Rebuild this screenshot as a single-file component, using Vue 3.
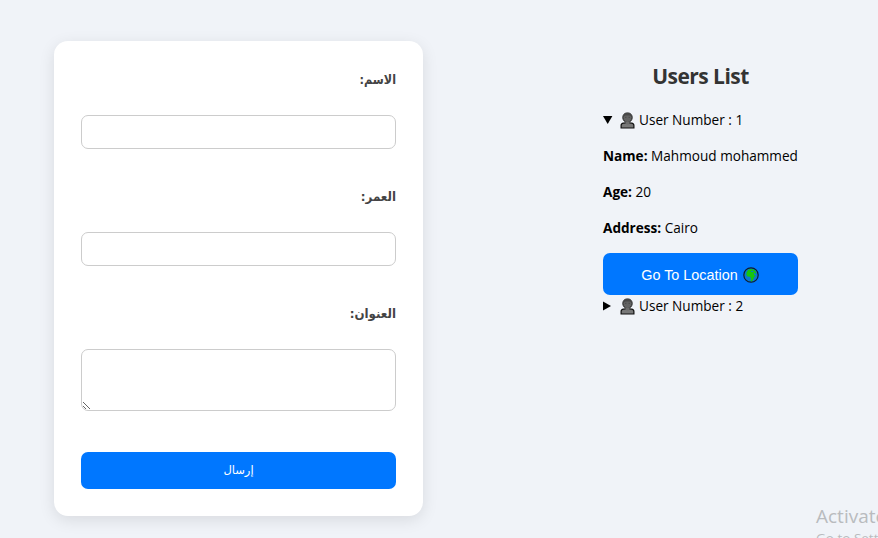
<script setup>
import { ref } from 'vue'

const name = ref('')
const age = ref('')
const address = ref('')
const openUser = ref(1)
const users = [
  { id: 1, name: 'Mahmoud mohammed', age: 20, address: 'Cairo' },
  { id: 2 },
]
</script>

<template>
  <main class="page">
    <form class="card" dir="rtl" @submit.prevent>
      <label for="name" class="short">الاسم:</label>
      <input id="name" v-model="name" type="text" />
      <label for="age">العمر:</label>
      <input id="age" v-model="age" type="text" />
      <label for="address">العنوان:</label>
      <textarea id="address" v-model="address"></textarea>
      <button class="submit" type="submit">إرسال</button>
    </form>

    <section class="users">
      <h2>Users List</h2>
      <div v-for="user in users" :key="user.id" class="user">
        <div class="summary" @click="openUser = user.id">
          <svg class="marker" viewBox="0 0 10 10">
            <path v-if="openUser === user.id" d="M0 1h9.4L4.7 9z" />
            <path v-else d="M0 .5v9L8 5z" />
          </svg>
          <svg class="person" viewBox="0 0 15 17">
            <path d="M1.100 16v-2.600c0-1.300.9-2 2.400-2.200l2-.3h4l2 .3c1.500.2 2.400.9 2.400 2.200V16z" fill="#787878" stroke="#111" stroke-width="1.200" />
            <path d="M7.500.9c3 0 4.700 1.900 4.700 4.600 0 2.600-2 4.900-4.700 4.900S2.800 8.100 2.800 5.500C2.800 2.800 4.500.9 7.500.9z" fill="#626262" stroke="#222" stroke-width="1" />
            <path d="M5.500 9.500h4v2.300c-1 .8-3 .8-4 0z" fill="#6c6c6c" />
            <path d="M3.200 4.800C3.400 2.500 4.900 1.300 7.500 1.300s4.100 1.200 4.300 3.500L9.700 3.500H5.500z" fill="#484848" />
            <path d="M5.300 5.300h1M8.700 5.300h1" stroke="#383838" stroke-width=".8" />
          </svg>
          <span class="text">User Number : {{ user.id }}</span>
        </div>
        <div v-if="openUser === user.id" class="details">
          <p><b>Name:</b> {{ user.name }}</p>
          <p><b>Age:</b> {{ user.age }}</p>
          <p><b>Address:</b> {{ user.address }}</p>
          <button class="location" type="button">
            <span>Go To Location</span>
            <svg viewBox="0 0 16 16">
              <circle cx="8" cy="8" r="7.200" fill="#0a78d0" stroke="#101d2b" stroke-width="1.200" />
              <path d="M3.600 5.200 5 3l2.500-1.100 3 .5 2 1.700.9 2.200-1.300.5-.8-1.300-.6 1 .9 1.700 1.200.2-2 2-.4 1.800-1.700 2.200-1-.5.2-2.500-.9-1.700-2.600-.3-1.100-1.600z" fill="#16c60c" />
              <path d="m7.500 4.400 1.800-.6 1.400.5-.9.700-1.300-.1z" fill="#0a78d0" />
            </svg>
          </button>
        </div>
      </div>
    </section>

    <aside class="watermark">
      <div class="big">Activate Windows</div>
      <div class="small">Go to Settings to activate Windows.</div>
    </aside>
  </main>
</template>

<style>
body {
  background: #f0f3f8;
}
</style>

<style scoped>
.page {
  position: relative;
  box-sizing: border-box;
  width: 100vw;
  height: 538px;
  padding: 41px 80px 0 54px;
  display: flex;
  justify-content: space-between;
  align-items: flex-start;
  overflow: hidden;
  font-family: "Open Sans", "Noto Sans", sans-serif;
  font-size: 13.6px;
  color: #000;
}
.card {
  box-sizing: border-box;
  width: 369px;
  height: 475px;
  padding: 27px;
  display: flex;
  flex-direction: column;
  border-radius: 14px;
  background: #fff;
  box-shadow: 0 4px 16px rgba(0, 0, 0, 0.1);
}
label {
  height: 22px;
  line-height: 23px;
  margin-bottom: 25px;
  font-family: "DejaVu Sans", sans-serif;
  font-size: 13px;
  font-weight: bold;
  color: #444;
  transform: scaleX(0.91);
  transform-origin: right center;
}
.short {
  transform: scaleX(0.86);
}
input,
textarea {
  box-sizing: border-box;
  width: 100%;
  margin: 0;
  padding: 8px;
  border: 1px solid #ccc;
  border-radius: 7px;
  outline: none;
  background: #fff;
}
input {
  height: 34px;
  margin-bottom: 36px;
}
textarea {
  height: 62px;
  flex: none;
  resize: vertical;
}
button {
  border: 0;
  border-radius: 7px;
  background: #07f;
  color: #fff;
  padding: 0;
}
.submit {
  height: 37px;
  margin-top: auto;
  padding-bottom: 1px;
  font: 11.5px "DejaVu Sans", sans-serif;
}
.users {
  width: 195px;
  padding-top: 18px;
}
h2 {
  margin: 0 0 18px;
  height: 34px;
  line-height: 34px;
  text-align: center;
  font-size: 21px;
  font-weight: 700;
  letter-spacing: -0.55px;
  color: #333;
}
.summary {
  display: flex;
  align-items: center;
  height: 18px;
  line-height: 18px;
}
.user + .user {
  margin-top: 2px;
}
.marker {
  width: 10px;
  height: 10px;
  margin-right: 7px;
}
.person {
  width: 15px;
  height: 17px;
  margin-right: 4px;
}
.details p {
  margin: 18px 0;
  height: 18px;
  line-height: 18px;
  white-space: nowrap;
}
.location {
  width: 195px;
  height: 42px;
  margin-top: -2px;
  padding: 2px 1px 0 0;
  display: flex;
  align-items: center;
  justify-content: center;
  gap: 5px;
  font: 14.4px "Liberation Sans", Arial, sans-serif;
}
.location svg {
  width: 16px;
  height: 16px;
}
.watermark {
  position: absolute;
  left: 816px;
  top: 503px;
  white-space: nowrap;
  color: #b9bbbe;
}
.big {
  font-size: 19px;
  line-height: 26px;
}
.small {
  font-size: 13.5px;
  line-height: 19px;
}
</style>
